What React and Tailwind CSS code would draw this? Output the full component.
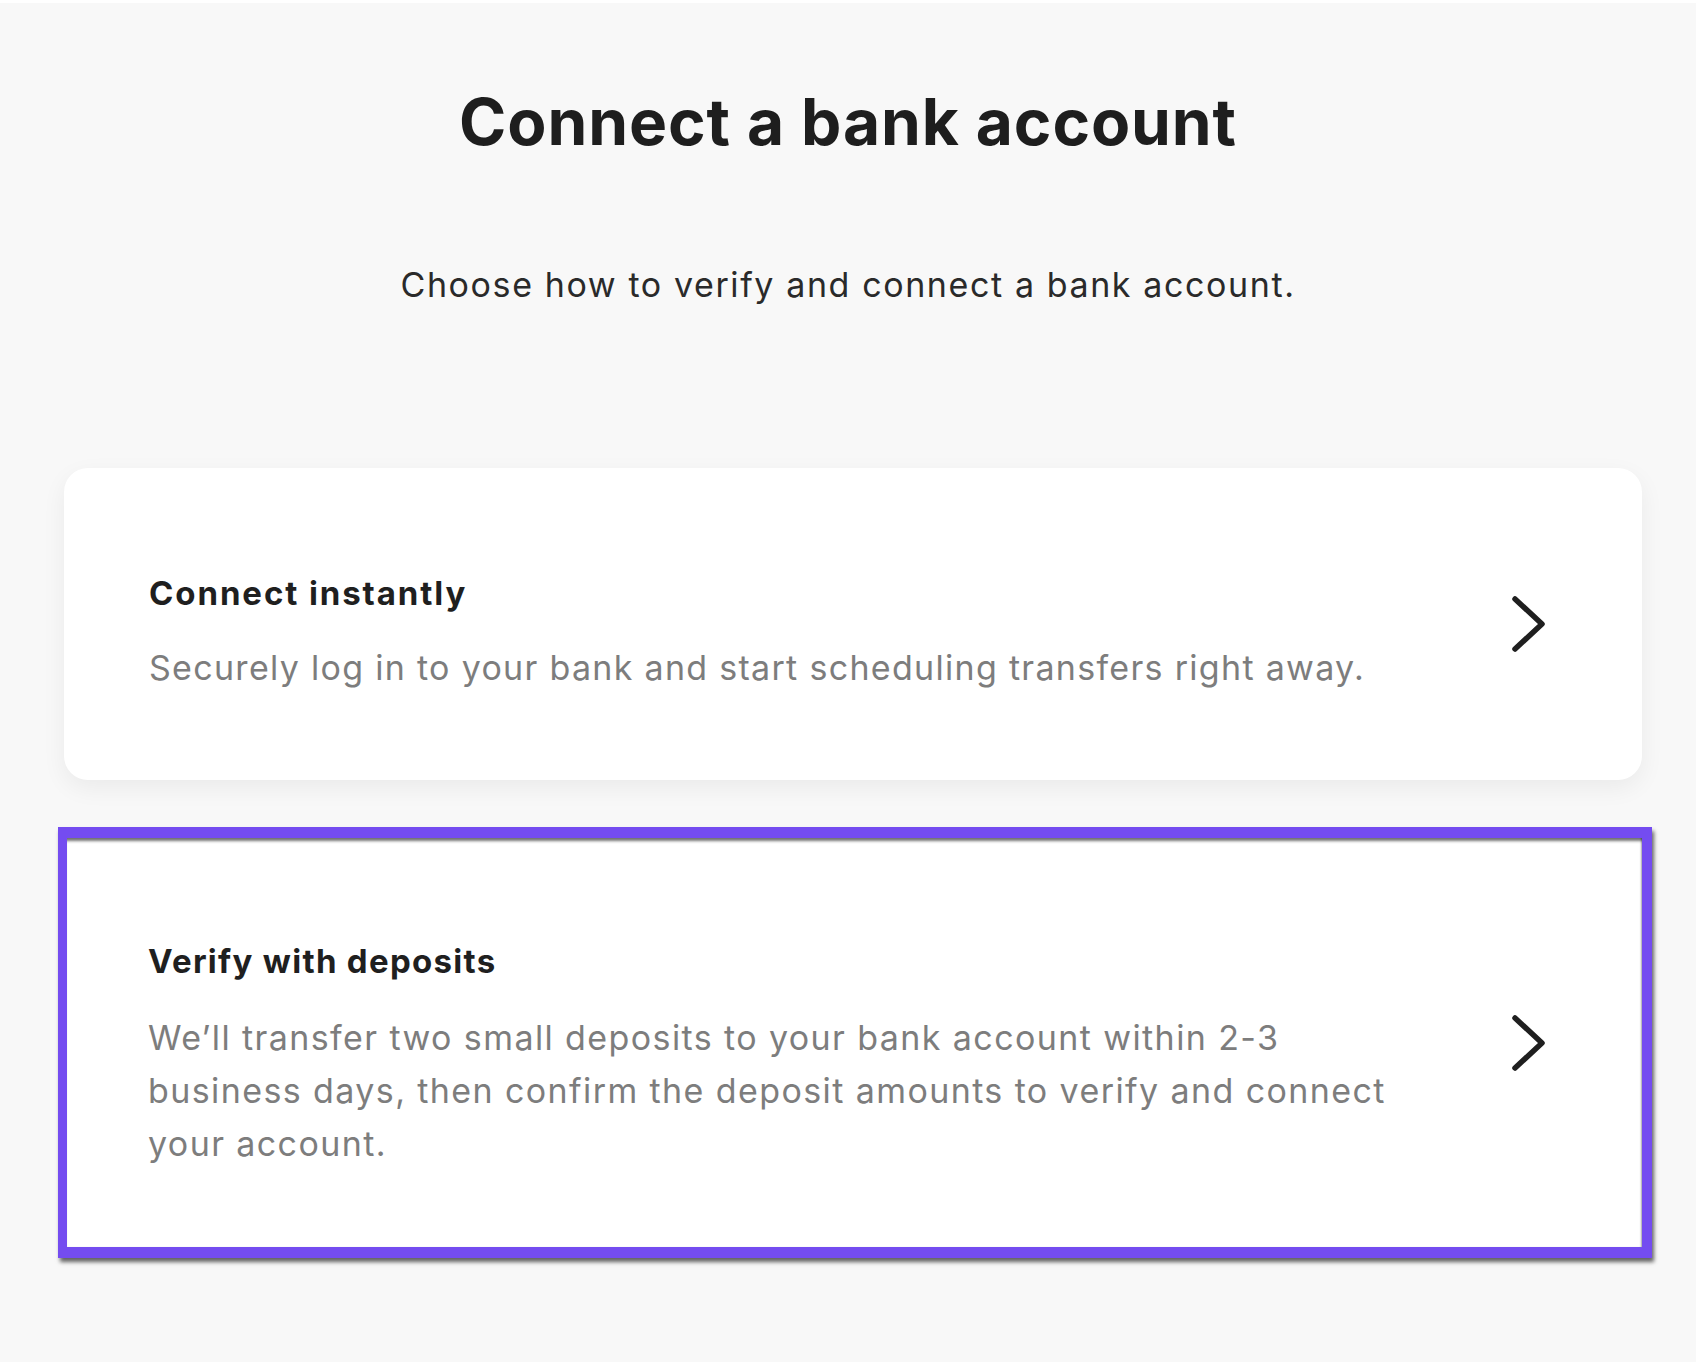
import React from "react";

const Chevron = () => (
  <svg width="34" height="56" viewBox="0 0 34 56" fill="none" className="shrink-0">
    <polyline
      points="3,3 30,28 3,53"
      stroke="#1f1f1f"
      strokeWidth="5.5"
      strokeLinecap="round"
      strokeLinejoin="round"
    />
  </svg>
);

const OptionCard = ({ title, children, highlighted }) => {
  if (highlighted) {
    return (
      <div className="ml-[58px] w-[1594px] h-[431px] bg-white border-[#744cf0] border-l-[9px] border-t-[11px] border-r-[10px] border-b-[11px] shadow-[2px_4px_4px_rgba(0,0,0,0.6),inset_0_5px_3px_-2px_rgba(0,0,0,0.55),inset_-2px_0_2px_-1px_rgba(0,0,0,0.35)] flex items-center justify-between pl-[81px] pr-[96px]">
        <div className="flex flex-col pt-[29px]">
          <h2 className="text-[33px] leading-[32px] font-bold tracking-[1.3px] text-[#1f1f1f]">{title}</h2>
          <p className="mt-[34px] text-[34px] leading-[53px] tracking-[1.4px] text-[#7d7d7d]">{children}</p>
        </div>
        <Chevron />
      </div>
    );
  }
  return (
    <div className="ml-[64px] w-[1578px] h-[312px] bg-white rounded-[24px] shadow-[0_8px_24px_rgba(0,0,0,0.06)] flex items-center justify-between pl-[85px] pr-[96px]">
      <div className="flex flex-col pt-[23px]">
        <h2 className="text-[33px] leading-[32px] font-bold tracking-[1.9px] text-[#1f1f1f]">{title}</h2>
        <p className="mt-[32px] text-[34px] leading-[53px] tracking-[1.3px] text-[#7d7d7d]">{children}</p>
      </div>
      <Chevron />
    </div>
  );
};

export default function App() {
  return (
    <div className="min-h-[1362px] bg-[#f8f8f8] font-['Inter',sans-serif]">
      <div className="h-[3px] bg-white" />
      <h1 className="mt-[87px] text-center text-[64px] leading-[64px] font-bold tracking-[0.9px] text-[#1e1e1e]">
        Connect a bank account
      </h1>
      <p className="mt-[114px] text-center text-[34px] leading-[34px] tracking-[1.6px] text-[#2a2a2a]">
        Choose how to verify and connect a bank account.
      </p>
      <div className="mt-[166px] flex flex-col gap-[47px] pb-[60px]">
        <OptionCard title="Connect instantly">
          Securely log in to your bank and start scheduling transfers right away.
        </OptionCard>
        <OptionCard title="Verify with deposits" highlighted>
          We’ll transfer two small deposits to your bank account within 2-3
          <br />
          business days, then confirm the deposit amounts to verify and connect
          <br />
          your account.
        </OptionCard>
      </div>
    </div>
  );
}
